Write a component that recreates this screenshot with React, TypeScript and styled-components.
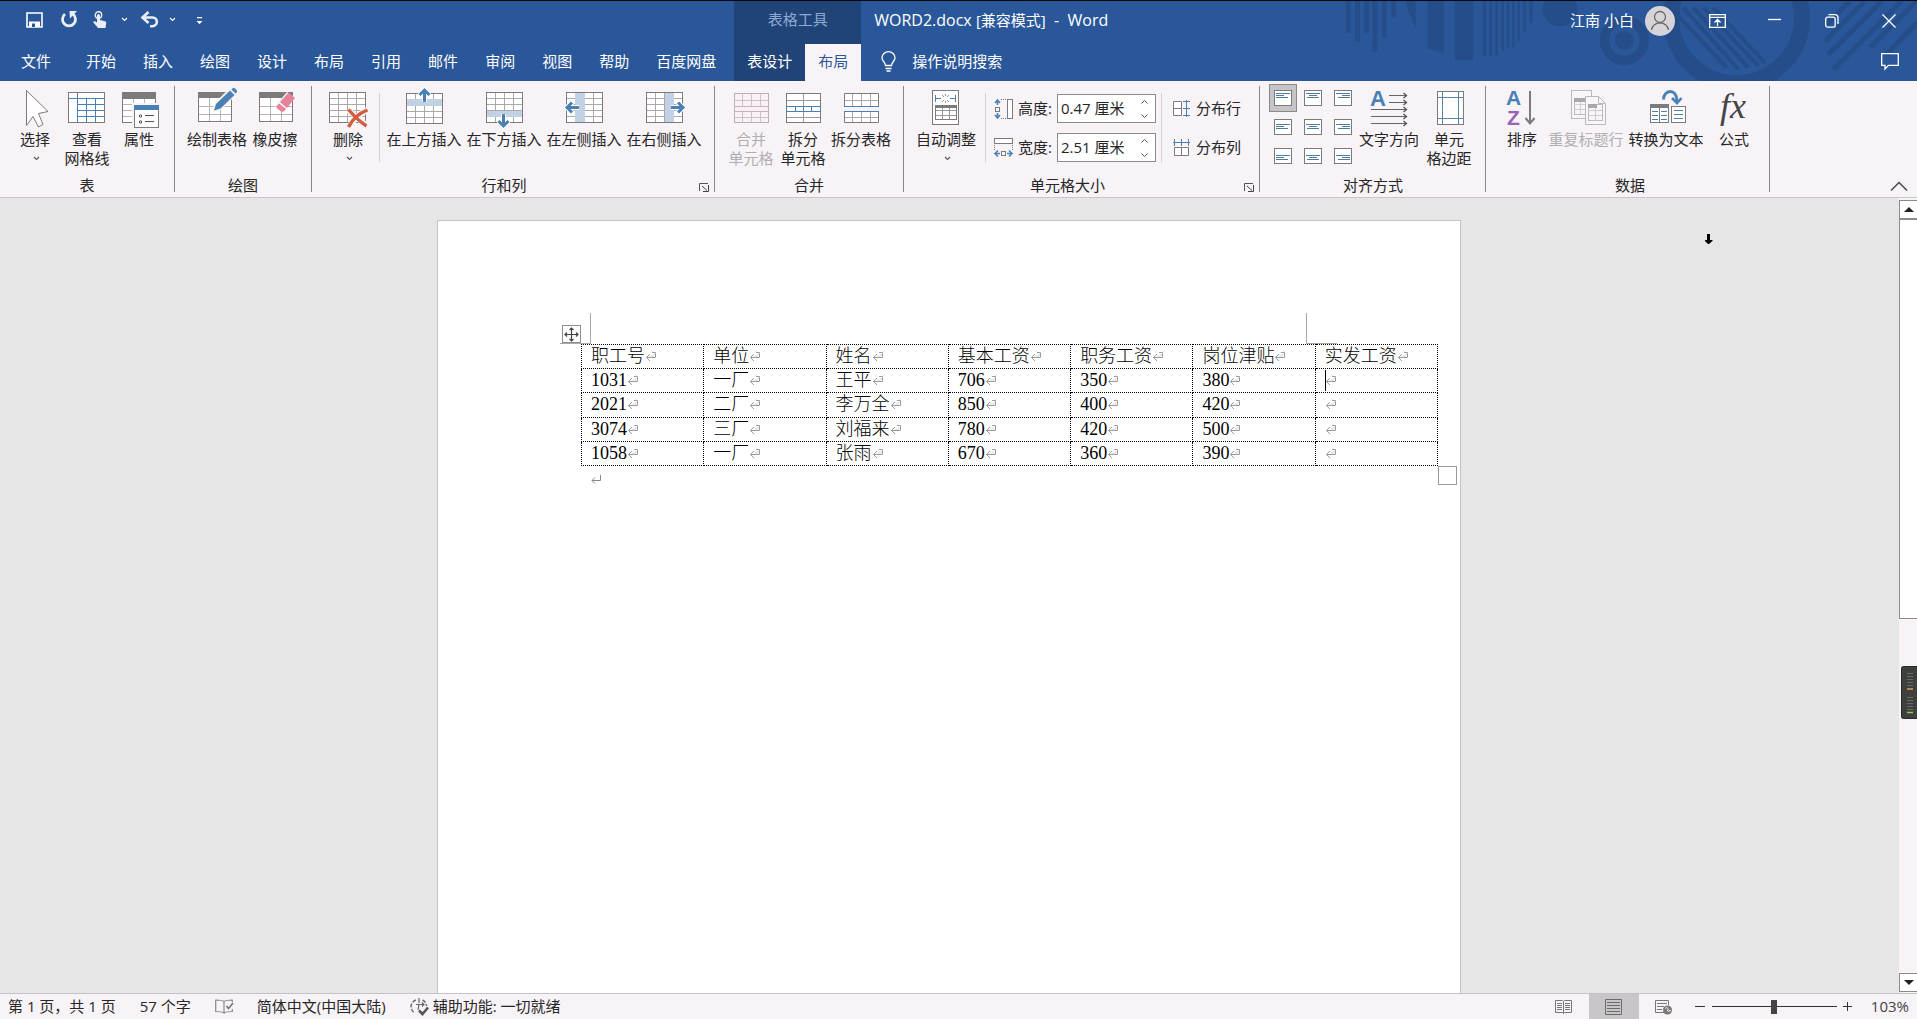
import React from "react";
import styled, { createGlobalStyle, css } from "styled-components";

const UI_FONT = '"Open Sans", "Noto Sans CJK SC", sans-serif';
const GREY = "#7b7b7b";
const BLUE = "#4a80b4";

const GlobalStyle = createGlobalStyle`
  *, *::before, *::after { box-sizing: border-box; }
  body { margin: 0; background: #e6e6e6; }
  button, input { font: inherit; color: inherit; }
  svg { display: block; flex: none; overflow: visible; }
`;

const plainButton = css`
  border: 0;
  padding: 0;
  margin: 0;
  background: transparent;
  cursor: default;
`;

const Shell = styled.div`
  height: 100vh;
  display: flex;
  flex-direction: column;
  overflow: hidden;
  font-family: ${UI_FONT};
  font-size: 15px;
  line-height: 19px;
  color: #262626;
  white-space: nowrap;
`;

/* ---------- header ---------- */

const Header = styled.header`
  position: relative;
  display: grid;
  grid-template-columns: auto auto 1fr;
  grid-template-rows: 43px 38px;
  background: #2a579a;
  border-top: 1px solid #05070f;
  margin-bottom: -1px;
  color: #fff;
  flex: none;
`;

const Pattern = styled.svg`
  position: absolute;
  right: 0;
  top: 0;
  overflow: hidden;
`;

const QuickAccess = styled.div`
  display: flex;
  align-items: center;
  padding: 0 0 6px 23px;
`;

const QuickButton = styled.button<{ $w: number }>`
  ${plainButton}
  width: ${(p) => p.$w}px;
  height: 22px;
  display: flex;
  align-items: center;
  justify-content: center;
`;

const ContextTitle = styled.div`
  background: #214478;
  color: #8ea9d0;
  text-align: center;
  line-height: 37px;
`;

const TitleArea = styled.div`
  position: relative;
  display: flex;
  align-items: center;
  padding: 0 0 4px 13px;
`;

const DocTitle = styled.h1`
  flex: 1;
  margin: 0;
  font-size: 16px;
  font-weight: 400;
  white-space: pre;
`;

const DocMode = styled.span`
  font-size: 15px;
`;

const Account = styled.button`
  ${plainButton}
  display: flex;
  align-items: center;
  gap: 11px;
  margin-right: 14px;
`;

const WindowButton = styled.button`
  ${plainButton}
  width: 57px;
  height: 34px;
  display: flex;
  align-items: center;
  justify-content: center;
`;

const TabStrip = styled.nav`
  display: flex;
  gap: 1px;
  padding-right: 5px;
`;

const ContextTabs = styled.nav`
  display: flex;
  background: #214478;
`;

const Tab = styled.button<{ $active?: boolean; $file?: boolean }>`
  ${plainButton}
  padding: 0 ${(p) => (p.$file ? 21 : 13)}px 3px;
  ${(p) => p.$active && "background: #f7f3f7; color: #2a579a;"}
`;

const TabTools = styled.div`
  position: relative;
  display: flex;
  align-items: center;
  justify-content: space-between;
  padding: 0 18px 3px 20px;
`;

const TellMe = styled.button`
  ${plainButton}
  display: flex;
  align-items: center;
  gap: 16px;
`;

const IconButton = styled.button`
  ${plainButton}
`;

/* ---------- ribbon ---------- */

const Ribbon = styled.div`
  position: relative;
  display: flex;
  flex: none;
  padding: 5px 0;
  background: #f7f3f7;
  border-bottom: 1px solid #c9c7c9;
`;

const Group = styled.section<{ $left: number; $right: number }>`
  position: relative;
  display: flex;
  flex-direction: column;
  border-right: 1px solid #868686;
  padding: 0 ${(p) => p.$right}px 0 ${(p) => p.$left}px;
`;

const GroupBody = styled.div`
  display: flex;
  height: 92px;
`;

const GroupLabel = styled.h2<{ $launcher?: boolean }>`
  margin: 0;
  padding-right: ${(p) => (p.$launcher ? 20 : 0)}px;
  font-size: 15px;
  font-weight: 400;
  line-height: 14px;
  text-align: center;
`;

const Launcher = styled.button`
  ${plainButton}
  position: absolute;
  right: 5px;
  bottom: 0;
`;

const BigButton = styled.button<{ $w: number }>`
  ${plainButton}
  width: ${(p) => p.$w}px;
  display: flex;
  flex-direction: column;
  align-items: center;
  &:disabled { color: #b1aeb1; }
`;

const ButtonText = styled.span`
  white-space: pre;
  text-align: center;
`;

const ChevronRow = styled.span`
  height: 19px;
  display: flex;
  align-items: center;
  padding-left: 3px;
  color: #555;
`;

const Divider = styled.div<{ $before: number }>`
  width: 1px;
  height: 69px;
  margin: 7px 4px 0 ${(p) => p.$before}px;
  background: #d3d0d3;
`;

const SizeRows = styled.div`
  display: flex;
  flex-direction: column;
  gap: 10px;
  padding: 8px 0 0 4px;
`;

const SizeRow = styled.div`
  display: flex;
  align-items: center;
  justify-content: space-between;
  height: 29px;
  gap: 5px;
`;

const Spinner = styled.div`
  display: flex;
  width: 99px;
  height: 29px;
  border: 1px solid #8b8b8b;
  background: #fff;
`;

const SpinnerInput = styled.input`
  flex: 1;
  min-width: 0;
  border: 0;
  padding: 0 0 0 3px;
  background: transparent;
  outline: 0;
`;

const SpinnerArrows = styled.div`
  display: flex;
  flex-direction: column;
  justify-content: center;
  gap: 1px;
  width: 20px;
`;

const ArrowButton = styled.button`
  ${plainButton}
  height: 13px;
  display: flex;
  align-items: center;
  justify-content: center;
`;

const DistributeColumn = styled.div`
  display: flex;
  flex-direction: column;
  gap: 10px;
  padding: 8px 0 0 7px;
`;

const DistributeButton = styled.button`
  ${plainButton}
  display: flex;
  align-items: center;
  gap: 6px;
  height: 29px;
`;

const AlignGrid = styled.div`
  display: grid;
  grid-template-columns: repeat(3, 28px);
  grid-auto-rows: 28px;
  gap: 1px 2px;
  margin-top: -2px;
`;

const AlignButton = styled.button<{ $on: boolean }>`
  ${plainButton}
  display: flex;
  align-items: center;
  justify-content: center;
  ${(p) => p.$on && "background: #c6c4c6; border: 1px solid #8a8a8a;"}
`;

const Collapse = styled.button`
  ${plainButton}
  margin: auto 9px 0 auto;
  padding-bottom: 1px;
`;

/* ---------- document ---------- */

const Workspace = styled.main`
  flex: 1;
  min-height: 0;
  display: flex;
  background: #e6e6e6;
`;

const Canvas = styled.div`
  position: relative;
  flex: 1;
  display: flex;
  justify-content: center;
  padding: 22px 1px 0 0;
`;

const Page = styled.article`
  position: relative;
  width: 1024px;
  background: #fff;
  border: 1px solid #c4c4c4;
  border-bottom: 0;
  padding: 123px 0 0 143px;
`;

const SheetTable = styled.table`
  position: relative;
  width: 857px;
  height: 122px;
  table-layout: fixed;
  border-collapse: collapse;
  font-family: "Liberation Serif", "Noto Sans CJK SC Light", "Noto Sans CJK SC", serif;
  font-size: 18px;
  line-height: 23px;
  color: #000;
`;

const cell = css`
  height: 24px;
  padding: 0 0 0 9px;
  border: 1px dotted #000;
  text-align: left;
  font-weight: 300;
`;

const HeadCell = styled.th`${cell}`;
const DataCell = styled.td`${cell}`;

const CellLine = styled.span`
  position: relative;
  display: flex;
  align-items: center;
  height: 23px;
`;

const Caret = styled.span`
  position: absolute;
  left: 0;
  top: 1px;
  width: 1px;
  height: 21px;
  background: #000;
`;

const EndParagraph = styled.p`
  margin: 0;
  padding: 9px 0 0 10px;
`;

const Overlay = styled.svg<{ $x: number; $y: number }>`
  position: absolute;
  left: ${(p) => p.$x}px;
  top: ${(p) => p.$y}px;
`;

const Pointer = styled.svg`
  position: absolute;
  right: 185px;
  top: 35px;
`;

const ScrollBar = styled.div`
  position: relative;
  width: 18px;
  display: flex;
  flex-direction: column;
  padding: 2px 0 1px;
  background: #f7f3f7;
`;

const ScrollArrow = styled.button`
  ${plainButton}
  height: 19px;
  flex: none;
  display: flex;
  align-items: center;
  justify-content: center;
  background: #fff;
  border: 1px solid #8b8b8b;
  border-right: 0;
`;

const ScrollTrack = styled.div`
  flex: 1;
`;

const ScrollThumb = styled.div`
  height: 53%;
  background: #fff;
  border: 1px solid #8b8b8b;
  border-right: 0;
`;

const Meter = styled.div`
  position: absolute;
  right: 0;
  top: 468px;
  width: 16px;
  height: 53px;
  padding: 6px 5px;
  border: 1px solid #2a2a2a;
  border-right: 0;
  border-radius: 3px 0 0 3px;
  background: #3e403e;
`;

/* ---------- status bar ---------- */

const StatusBar = styled.footer`
  flex: none;
  display: flex;
  align-items: center;
  height: 26px;
  padding: 0 8px;
  background: #f7f3f7;
  border-top: 1px solid #c4c2c4;
`;

const StatusItem = styled.button`
  ${plainButton}
  display: flex;
  align-items: center;
  gap: 4px;
  margin-right: 24px;
`;

const StatusGap = styled.div`
  flex: 1;
`;

const ViewButton = styled.button<{ $on?: boolean }>`
  ${plainButton}
  width: 50px;
  height: 25px;
  display: flex;
  align-items: center;
  justify-content: center;
  ${(p) => p.$on && "background: #c8c6c8;"}
`;

const ZoomStep = styled.button`
  ${plainButton}
  width: 22px;
  height: 25px;
  display: flex;
  align-items: center;
  justify-content: center;
`;

const ZoomRange = styled.input`
  appearance: none;
  width: 125px;
  height: 16px;
  margin: 0 0 0 1px;
  background: linear-gradient(#333, #333) center / 100% 1px no-repeat;
  &::-webkit-slider-thumb {
    appearance: none;
    width: 6px;
    height: 14px;
    background: #444;
  }
`;

const ZoomValue = styled.button`
  ${plainButton}
  margin-left: 12px;
  color: #444;
`;

/* ---------- icons ---------- */

const Ico = ({ children }: { children: React.ReactNode }) => (
  <svg width="40" height="44" viewBox="0 0 40 44" fill="none">
    {children}
  </svg>
);

const lines = (vs: number[], hs: number[], x1: number, x2: number, y1: number, y2: number) =>
  vs.map((v) => `M${v + 0.5} ${y1}V${y2}`).join("") + hs.map((h) => `M${x1} ${h + 0.5}H${x2}`).join("");

const Chevron = () => (
  <svg width="7" height="5" viewBox="0 0 7 5" fill="none">
    <path d="M1 1l2.500 2.500L6 1" stroke="currentColor" strokeWidth="1.1" />
  </svg>
);

const SpinArrow = ({ up }: { up?: boolean }) => (
  <svg width="9" height="6" viewBox="0 0 9 6" fill="none">
    <path d={up ? "M1.500 4.500l3-3 3 3" : "M1.500 1.500l3 3 3-3"} stroke="#555" />
  </svg>
);

const SelectIcon = () => (
  <Ico>
    <path d="M11.500 4.500V39.500L18 30.500L23.500 41L28 38.500L23.500 27.500L33 25.500Z" fill="#fff" stroke={GREY} />
  </Ico>
);

const ViewGridIcon = () => (
  <Ico>
    <rect x="1.500" y="6.500" width="36" height="30" fill="#fff" />
    <path d={lines([19, 28], [18, 24, 30], 10, 38, 12, 37) + "M10.500 7V37M2 12.500H37"} stroke={BLUE} />
    <rect x="1.500" y="6.500" width="36" height="30" stroke={GREY} />
  </Ico>
);

const PropertiesIcon = () => (
  <Ico>
    <rect x="3.500" y="6.500" width="33" height="30" fill="#fff" stroke={GREY} />
    <path d={lines([14, 25], [18, 24, 30], 4, 36, 12, 36)} stroke="#b5b5b5" />
    <rect x="3" y="6" width="34" height="7" fill={GREY} />
    <rect x="13" y="17" width="27" height="27" fill="#f7f3f7" />
    <rect x="15.500" y="19.500" width="24" height="22" fill="#fff" stroke={GREY} />
    <rect x="15" y="19" width="25" height="5" fill={BLUE} />
    <circle cx="21.500" cy="30" r="1.200" stroke="#444" />
    <circle cx="21.500" cy="36" r="1.200" stroke="#444" />
    <path d="M26 29.500h9M26 35.500h9" stroke="#555" />
  </Ico>
);

const HeaderGrid = ({ x }: { x: number }) => (
  <>
    <rect x={x + 0.5} y="6.500" width="33" height="30" fill="#fff" />
    <path d={lines([x + 11, x + 22], [20, 28], x, x + 33, 12, 36)} stroke="#b5b5b5" />
    <rect x={x + 0.5} y="6.500" width="33" height="29" stroke={GREY} />
    <rect x={x} y="6" width="34" height="6" fill={GREY} />
  </>
);

const DrawTableIcon = () => (
  <Ico>
    <HeaderGrid x={1} />
    <path d="M16 25l2.500-8L34 2l5.500 5.500L24 23z" fill="#f7f3f7" stroke="#f7f3f7" strokeWidth="1.500" />
    <path d="M17 24.500l2-6.500L33 4.500l4.500 4.500L23.500 22.500z" fill={BLUE} />
    <path d="M34.500 3.500l1.500-1.500q1-.500 2 .500l1.500 1.500q1 1 .500 2L38.500 7.500z" fill={BLUE} />
  </Ico>
);

const EraserIcon = () => (
  <Ico>
    <HeaderGrid x={4} />
    <path d="M32 6l8 6-12 14-8-6z" fill="#f7f3f7" />
    <path d="M33.500 6.500L40 12L32 22L25 16Z" fill="#e6829a" />
    <path d="M24 17.500l7 5.500-2 2.500h-3l-4.500-3.500v-2z" fill="#e6829a" />
  </Ico>
);

const PlainGrid = ({ band, x = 1, y = 6 }: { band?: string; x?: number; y?: number }) => (
  <g transform={`translate(${x} ${y})`}>
    <rect x="0.500" y="0.500" width="36" height="30" fill="#fff" />
    <path d={lines([9, 18, 27], [6, 12, 18, 24], 0, 36, 0, 30)} stroke="#a9a9a9" />
    {band && <path d={band} fill="#c3d1e4" />}
    <rect x="0.500" y="0.500" width="36" height="30" stroke={GREY} />
  </g>
);

const DeleteIcon = () => (
  <Ico>
    <PlainGrid />
    <path d="M20 24l19 16M39 24c-8 4-14 10-18 18" stroke="#f7f3f7" strokeWidth="6" />
    <path d="M20.500 23.500c5 6 11 12 18 16.500M39.500 24c-8 3-15 9-19 17" stroke="#d35c3e" strokeWidth="3.400" />
  </Ico>
);

const ARROW_UP = "M0 13V1M-5 6L0 1L5 6";
const InsertIcon = ({ dir }: { dir: "up" | "down" | "left" | "right" }) => {
  const spec = {
    up: ["M1 6H36V13H1Z", 20.5, 3, 0],
    down: ["M1 19H36V25H1Z", 19.5, 41, 180],
    left: ["M9 1H19V30H9Z", 2, 21.5, -90],
    right: ["M19 1H28V30H19Z", 40, 21.5, 90],
  }[dir] as [string, number, number, number];
  return (
    <Ico>
      <PlainGrid x={2} y={dir === "up" ? 7 : 6} band={spec[0]} />
      <g transform={`translate(${spec[1]} ${spec[2]}) rotate(${spec[3]})`}>
        <path d={ARROW_UP} stroke="#fff" strokeWidth="5" />
        <path d={ARROW_UP} stroke={BLUE} strokeWidth="3" />
      </g>
    </Ico>
  );
};

const MergeIcon = () => (
  <Ico>
    <rect x="3.500" y="7.500" width="34" height="29" fill="#faf1f6" />
    <path d="M11.500 8V20M20.500 8V20M29.500 8V20M11.500 26V36M20.500 26V36M29.500 26V36M4 14.500H37M4 31.500H37" stroke="#cfc3ca" />
    <path d="M4 20.500H37M4 25.500H37" stroke="#c9b3bf" />
    <rect x="3.500" y="7.500" width="34" height="29" stroke="#b9b1b6" />
  </Ico>
);

const SplitCellsIcon = () => (
  <Ico>
    <rect x="3.500" y="7.500" width="34" height="29" fill="#fff" stroke={GREY} />
    <path d="M20.500 8V20M20.500 26V36M4 14.500H37M4 31.500H37" stroke="#999" />
    <path d="M3.500 20.500H37.500V25.500H3.500ZM12.500 20V26M20.500 20V26M28.500 20V26" stroke={BLUE} />
  </Ico>
);

const SplitTableIcon = () => (
  <Ico>
    <path d="M3.500 7.500H37.500V20.500H3.500ZM3.500 25.500H37.500V36.500H3.500Z" fill="#fff" stroke={GREY} />
    <path d="M11.500 8V20M20.500 8V20M29.500 8V20M11.500 26V36M20.500 26V36M29.500 26V36M4 14.500H37M4 31.500H37" stroke="#a9a9a9" />
    <path d="M3 20.500H38M3 25.500H38" stroke={BLUE} />
  </Ico>
);

const AutoFitIcon = () => (
  <Ico>
    <rect x="6.500" y="4.500" width="26" height="34" fill="#fff" stroke={GREY} />
    <path d="M9.500 9V16M29.500 9V16M10 12.500H15M24 12.500H29" stroke={BLUE} />
    <path d="M16 9l2 2M23 9l-2 2M16 16l2-2M23 16l-2-2M19.500 8v2M19.500 15v2" stroke="#999" />
    <path d={lines([16, 23], [24, 29], 10, 30, 20, 34)} stroke="#999" />
    <rect x="9.500" y="19.500" width="21" height="14" stroke={GREY} />
    <rect x="9" y="19" width="22" height="3" fill={GREY} />
  </Ico>
);

const TextDirectionIcon = () => (
  <Ico>
    <text x="1" y="20" fontFamily="Liberation Sans, sans-serif" fontWeight="700" fontSize="22" fill={BLUE}>A</text>
    <path d="M20 9.500H37M20 16.500H37M2 23.500H37M2 30.500H37M2 37.500H37" stroke="#666" />
    <path d="M34.500 7l3 2.500-3 2.500M34.500 14l3 2.500-3 2.500M34.500 21l3 2.500-3 2.500M34.500 28l3 2.500-3 2.500M34.500 35l3 2.500-3 2.500" stroke="#555" strokeWidth="1.300" />
  </Ico>
);

const CellMarginsIcon = () => (
  <Ico>
    <rect x="8.500" y="5.500" width="26" height="33" fill="#fff" stroke={GREY} />
    <path d="M13.500 6V38M29.500 6V38M9 11.500H34M9 32.500H34" stroke="#5b88a8" />
  </Ico>
);

const SortIcon = () => (
  <Ico>
    <text x="4" y="19" fontFamily="Liberation Sans, sans-serif" fontWeight="700" fontSize="21" fill={BLUE}>A</text>
    <text x="5" y="39" fontFamily="Liberation Sans, sans-serif" fontWeight="700" fontSize="21" fill="#9a62b4">Z</text>
    <path d="M28 5V37M23.500 32l4.500 5.500 4.500-5.500" stroke={GREY} strokeWidth="2" />
  </Ico>
);

const RepeatHeaderIcon = () => (
  <Ico>
    <rect x="5.500" y="4.500" width="20" height="28" fill="#faf5f9" stroke="#bcb8bc" />
    <rect x="8.500" y="12.500" width="13" height="16" stroke="#bcb8bc" />
    <path d="M8 18.500h13M8 23.500h13M14.500 15v13" stroke="#cfcbcf" />
    <rect x="8" y="12" width="14" height="4" fill="#aaa6aa" />
    <path d="M19.500 10.500H32.500L39.500 17.500V38.500H19.500Z" fill="#faf5f9" stroke="#bcb8bc" />
    <path d="M32.500 11V17.500H39" stroke="#bcb8bc" />
    <rect x="22.500" y="18.500" width="14" height="16" stroke="#bcb8bc" />
    <path d="M22 24.500h14M22 29.500h14M29.500 20v15" stroke="#cfcbcf" />
    <rect x="22" y="18" width="9" height="4" fill="#aaa6aa" />
  </Ico>
);

const ConvertIcon = () => (
  <Ico>
    <rect x="4.500" y="18.500" width="18" height="18" fill="#fff" stroke={GREY} />
    <rect x="4" y="18" width="19" height="4" fill={GREY} />
    <path d="M13.500 22V36" stroke={GREY} />
    <path d="M6 25.500h6M6 29.500h6M6 33.500h6M15 25.500h6M15 29.500h6M15 33.500h6" stroke={BLUE} />
    <rect x="25.500" y="20.500" width="14" height="16" fill="#fff" stroke={GREY} />
    <path d="M28 24.500h9M28 28.500h9M28 32.500h9" stroke={BLUE} />
    <path d="M17.500 13.500C18 3 30.500 2 31 15" stroke={BLUE} strokeWidth="3" />
    <path d="M26 12L31 17L35.500 12" stroke={BLUE} strokeWidth="2.600" />
  </Ico>
);

const FormulaIcon = () => (
  <Ico>
    <text x="6" y="32" fontFamily="Liberation Serif, serif" fontStyle="italic" fontSize="36" fill="#444">fx</text>
  </Ico>
);

const HeightIcon = () => (
  <svg width="19" height="20" viewBox="0 0 19 20" fill="none">
    <path d="M3.500 1V6M3.500 14V19M1 4l2.500-3L6 4M1 16l2.500 3L6 16" stroke={BLUE} strokeWidth="1.600" />
    <rect x="1.500" y="8.500" width="4" height="4" stroke={GREY} />
    <path d="M7 .500H13M7 19.500H13" stroke="#777" strokeDasharray="1 1" />
    <rect x="13.500" y=".500" width="5" height="19" fill="#fff" stroke={GREY} />
  </svg>
);

const WidthIcon = () => (
  <svg width="19" height="19" viewBox="0 0 19 19" fill="none">
    <rect x=".500" y=".500" width="18" height="5" fill="#fff" stroke={GREY} />
    <path d="M.500 7V13M18.500 7V13" stroke="#777" strokeDasharray="1 1" />
    <path d="M1 15.500H6M13 15.500H18M4 12.500l-3 3 3 3M15 12.500l3 3-3 3" stroke={BLUE} strokeWidth="1.600" />
    <rect x="7.500" y="13.500" width="4" height="4" stroke={GREY} />
  </svg>
);

const DistributeRowsIcon = () => (
  <svg width="17" height="17" viewBox="0 0 17 17" fill="none">
    <path d="M.500 1.500H8.500V15.500H.500ZM.500 8.500H8.500" fill="#fff" stroke={GREY} />
    <path d="M13.500 0V17M10 1.500H17M10 8.500H17M10 15.500H17" stroke={BLUE} />
  </svg>
);

const DistributeColumnsIcon = () => (
  <svg width="17" height="17" viewBox="0 0 17 17" fill="none">
    <path d="M1.500 8.500H15.500V16.500H1.500ZM8.500 8.500V16.500" fill="#fff" stroke={GREY} />
    <path d="M0 3.500H17M1.500 0V7M8.500 0V7M15.500 0V7" stroke={BLUE} />
  </svg>
);

const AlignIcon = ({ row, col }: { row: number; col: number }) => {
  const top = [3, 5, 7][row];
  const widths = [14, 8, 12];
  return (
    <svg width="18" height="16" viewBox="0 0 18 16" fill="none">
      <rect x=".500" y=".500" width="17" height="15" fill="#fff" stroke={GREY} />
      {widths.map((w, i) => {
        const x = col === 0 ? 2 : col === 1 ? (18 - w) / 2 : 16 - w;
        return <path key={i} d={`M${x} ${top + i * 2 + 0.5}h${w}`} stroke="#4e7a9c" />;
      })}
    </svg>
  );
};

const LauncherIcon = () => (
  <svg width="10" height="9" viewBox="0 0 10 9" fill="none">
    <path d="M.500 8V.500H9" stroke="#555" />
    <path d="M3 3l5 4.500M9.500 2V8.500H4" stroke="#444" />
  </svg>
);

const ReturnMark = () => (
  <svg width="12" height="11" viewBox="0 0 12 11" fill="none">
    <path d="M7 1.500H10.500V6.500H1.500M5 3L1.500 6.500L5 10" stroke="#9c9c9c" />
    <path d="M5.500 5H9V3" stroke="#d8d8d8" />
  </svg>
);

const HeaderPattern = () => (
  <Pattern width="577" height="80" viewBox="0 0 1731 240" fill="none">
    <g fill="#1f3f6e" opacity=".38">
      <path d="M18 0h14v95h-14zM45 0h15v122h-15zM72 0h15v95h-15zM97 0h15v152h-15zM126 0h14v110h-14zM154 0h14v50h-14zM195 0h32v85z" />
      <path d="M262 0h50v157l-50-14zM344 0h56v178h-56z" />
      <path d="M428 0h10v165h-10zM448 0h8v165h-8zM466 0h8v165h-8zM484 0h8v150h-8zM500 0h8v140h-8zM516 0h8v140h-8zM532 0h8v120h-8zM550 0h8v95h-8zM568 0h10v65h-10z" />
      <circle cx="660" cy="25" r="52" />
      <circle cx="853" cy="118" r="28" />
    </g>
    <g stroke="#1f3f6e" opacity=".38">
      <circle cx="853" cy="118" r="60" strokeWidth="28" />
      <circle cx="1190" cy="50" r="196" strokeWidth="48" />
      <path d="M1000 30L1160 200M1030 20L1195 205M1060 20L1225 200M1090 20L1255 195M1120 20L1275 185" strokeWidth="12" />
      <path d="M1460 70L1530 0M1455 120L1575 0M1465 160L1625 0M1480 205L1685 0M1590 140L1730 0M1640 160L1731 65" strokeWidth="15" />
    </g>
  </Pattern>
);

/* ---------- data ---------- */

const TABS = ["文件", "开始", "插入", "绘图", "设计", "布局", "引用", "邮件", "审阅", "视图", "帮助", "百度网盘"];
const COLUMNS = ["职工号", "单位", "姓名", "基本工资", "职务工资", "岗位津贴", "实发工资"];
const ROWS = [
  ["1031", "一厂", "王平", "706", "350", "380", ""],
  ["2021", "二厂", "李万全", "850", "400", "420", ""],
  ["3074", "三厂", "刘福来", "780", "420", "500", ""],
  ["1058", "一厂", "张雨", "670", "360", "390", ""],
];
const ALIGN_NAMES = ["靠上左对齐", "靠上居中", "靠上右对齐", "中部左对齐", "水平居中", "中部右对齐", "靠下左对齐", "靠下居中", "靠下右对齐"];

type ToolProps = { icon: React.ReactNode; text: string; w: number; menu?: boolean; disabled?: boolean };
const Tool = ({ icon, text, w, menu, disabled }: ToolProps) => (
  <BigButton $w={w} disabled={disabled}>
    {icon}
    <ButtonText>{text}</ButtonText>
    {menu && <ChevronRow><Chevron /></ChevronRow>}
  </BigButton>
);

type SizeFieldProps = { id: string; label: string; value: string; icon: React.ReactNode };
const SizeField = ({ id, label, value, icon }: SizeFieldProps) => (
  <SizeRow>
    {icon}
    <label htmlFor={id}>{label}</label>
    <Spinner>
      <SpinnerInput id={id} type="text" defaultValue={value} />
      <SpinnerArrows>
        <ArrowButton aria-label="增加"><SpinArrow up /></ArrowButton>
        <ArrowButton aria-label="减少"><SpinArrow /></ArrowButton>
      </SpinnerArrows>
    </Spinner>
  </SizeRow>
);

export default function App() {
  return (
    <Shell>
      <GlobalStyle />
      <Header>
        <HeaderPattern />
        <QuickAccess>
          <QuickButton $w={22} aria-label="保存">
            <svg width="17" height="16" viewBox="0 0 17 16" fill="none">
              <path d="M1 1H16V15H1Z" stroke="#fff" strokeWidth="1.600" />
              <path d="M3 9.500H14V15H3Z" fill="#fff" />
              <path d="M6 11.500H9V15H6Z" fill="#2a579a" />
            </svg>
          </QuickButton>
          <QuickButton $w={48} aria-label="重复">
            <svg width="18" height="17" viewBox="0 0 18 17" fill="none">
              <path d="M5 3.200A6.500 6.500 0 1 0 13 3.200" stroke="#e9eef7" strokeWidth="2.800" />
              <path d="M9.500 0H17L10 7.500Z" fill="#e9eef7" />
            </svg>
          </QuickButton>
          <QuickButton $w={14} aria-label="触摸/鼠标模式">
            <svg width="14" height="17" viewBox="0 0 14 17" fill="none">
              <circle cx="5.500" cy="4" r="3.200" stroke="#e9eef7" strokeWidth="1.400" />
              <path d="M4 4.500a1.500 1.500 0 0 1 3 0V9l5 1.200q1.500.500 1.200 2L12.500 17H5L0 11q1-1.500 4 .500Z" fill="#e9eef7" />
            </svg>
          </QuickButton>
          <QuickButton $w={34} aria-label="触摸菜单"><Chevron /></QuickButton>
          <QuickButton $w={18} aria-label="撤消">
            <svg width="18" height="16" viewBox="0 0 18 16" fill="none">
              <path d="M2 5.500H11.500a4.300 4.300 0 0 1 0 8.700H9" stroke="#e9eef7" strokeWidth="2.600" />
              <path d="M7.500 0L1.500 5.500L7.500 11" stroke="#e9eef7" strokeWidth="2.600" />
            </svg>
          </QuickButton>
          <QuickButton $w={26} aria-label="撤消列表"><Chevron /></QuickButton>
          <QuickButton $w={28} aria-label="自定义快速访问工具栏">
            <svg width="7" height="5" viewBox="0 0 7 5">
              <path d="M1 0H6V1.300H1ZM.500 4H6.500L3.500 7.200Z" fill="#fff" />
            </svg>
          </QuickButton>
        </QuickAccess>
        <ContextTitle>表格工具</ContextTitle>
        <TitleArea>
          <DocTitle>WORD2.docx <DocMode>[兼容模式]</DocMode>{"  -  Word"}</DocTitle>
          <Account>
            江南 小白
            <svg width="30" height="30" viewBox="0 0 30 30" fill="none">
              <circle cx="15" cy="15" r="15" fill="#d7d4d9" />
              <circle cx="15" cy="11" r="5.500" stroke="#666" strokeWidth="1.300" />
              <path d="M6.500 24C7.500 14.500 22.500 14.500 23.500 24" stroke="#666" strokeWidth="1.300" />
            </svg>
          </Account>
          <WindowButton aria-label="功能区显示选项">
            <svg width="17" height="14" viewBox="0 0 17 14" fill="none">
              <path d="M.700 .700H16.300V13.300H.700ZM.700 3.300H16.300M8.500 12V6M5.500 8.500L8.500 5.500L11.500 8.500" stroke="#fff" strokeWidth="1.300" />
            </svg>
          </WindowButton>
          <WindowButton aria-label="最小化">
            <svg width="13" height="13" viewBox="0 0 13 13"><path d="M0 5.500H13" stroke="#fff" strokeWidth="1.300" /></svg>
          </WindowButton>
          <WindowButton aria-label="还原">
            <svg width="14" height="14" viewBox="0 0 14 14" fill="none">
              <rect x=".700" y="3.200" width="9.500" height="10" rx="2" stroke="#fff" strokeWidth="1.300" />
              <path d="M3.500 .700H10a3 3 0 0 1 3 3V10" stroke="#fff" strokeWidth="1.300" />
            </svg>
          </WindowButton>
          <WindowButton aria-label="关闭">
            <svg width="14" height="14" viewBox="0 0 14 14"><path d="M.500 .500L13.500 13.500M13.500 .500L.500 13.500" stroke="#fff" strokeWidth="1.300" /></svg>
          </WindowButton>
        </TitleArea>
        <TabStrip>
          {TABS.map((t, i) => <Tab key={t} $file={i === 0}>{t}</Tab>)}
        </TabStrip>
        <ContextTabs>
          <Tab>表设计</Tab>
          <Tab $active>布局</Tab>
        </ContextTabs>
        <TabTools>
          <TellMe>
            <svg width="15" height="21" viewBox="0 0 15 21" fill="none">
              <path d="M4.500 14.500C4.500 11 1 10.500 1 6.800a6.500 6.200 0 0 1 13 0C14 10.500 10.500 11 10.500 14.500ZM4.500 17.500H10.500M5.500 20H9.500" stroke="#fff" strokeWidth="1.300" />
            </svg>
            操作说明搜索
          </TellMe>
          <IconButton aria-label="批注">
            <svg width="18" height="17" viewBox="0 0 18 17" fill="none">
              <path d="M.700 .700H17.300V12.300H7.500L4 16V12.300H.700Z" stroke="#fff" strokeWidth="1.300" />
            </svg>
          </IconButton>
        </TabTools>
      </Header>

      <Ribbon>
        <Group $left={11} $right={11}>
          <GroupBody>
            <Tool icon={<SelectIcon />} text="选择" w={48} menu />
            <Tool icon={<ViewGridIcon />} text={"查看\n网格线"} w={56} />
            <Tool icon={<PropertiesIcon />} text="属性" w={48} />
          </GroupBody>
          <GroupLabel>表</GroupLabel>
        </Group>
        <Group $left={10} $right={10}>
          <GroupBody>
            <Tool icon={<DrawTableIcon />} text="绘制表格" w={64} />
            <Tool icon={<EraserIcon />} text="橡皮擦" w={52} />
          </GroupBody>
          <GroupLabel>绘图</GroupLabel>
        </Group>
        <Group $left={12} $right={10}>
          <GroupBody>
            <Tool icon={<DeleteIcon />} text="删除" w={48} menu />
            <Divider $before={7} />
            <Tool icon={<InsertIcon dir="up" />} text="在上方插入" w={80} />
            <Tool icon={<InsertIcon dir="down" />} text="在下方插入" w={80} />
            <Tool icon={<InsertIcon dir="left" />} text="在左侧插入" w={80} />
            <Tool icon={<InsertIcon dir="right" />} text="在右侧插入" w={80} />
          </GroupBody>
          <GroupLabel $launcher>行和列</GroupLabel>
          <Launcher aria-label="表格属性"><LauncherIcon /></Launcher>
        </Group>
        <Group $left={10} $right={10}>
          <GroupBody>
            <Tool icon={<MergeIcon />} text={"合并\n单元格"} w={52} disabled />
            <Tool icon={<SplitCellsIcon />} text={"拆分\n单元格"} w={52} />
            <Tool icon={<SplitTableIcon />} text="拆分表格" w={64} />
          </GroupBody>
          <GroupLabel>合并</GroupLabel>
        </Group>
        <Group $left={10} $right={18}>
          <GroupBody>
            <Tool icon={<AutoFitIcon />} text="自动调整" w={64} menu />
            <Divider $before={7} />
            <SizeRows>
              <SizeField id="row-height" label="高度:" value="0.47 厘米" icon={<HeightIcon />} />
              <SizeField id="col-width" label="宽度:" value="2.51 厘米" icon={<WidthIcon />} />
            </SizeRows>
            <Divider $before={5} />
            <DistributeColumn>
              <DistributeButton><DistributeRowsIcon />分布行</DistributeButton>
              <DistributeButton><DistributeColumnsIcon />分布列</DistributeButton>
            </DistributeColumn>
          </GroupBody>
          <GroupLabel $launcher>单元格大小</GroupLabel>
          <Launcher aria-label="单元格大小设置"><LauncherIcon /></Launcher>
        </Group>
        <Group $left={9} $right={8}>
          <GroupBody>
            <AlignGrid>
              {ALIGN_NAMES.map((name, i) => (
                <AlignButton key={name} $on={i === 0} aria-label={name}>
                  <AlignIcon row={Math.floor(i / 3)} col={i % 3} />
                </AlignButton>
              ))}
            </AlignGrid>
            <Tool icon={<TextDirectionIcon />} text="文字方向" w={64} />
            <Tool icon={<CellMarginsIcon />} text={"单元\n格边距"} w={56} />
          </GroupBody>
          <GroupLabel>对齐方式</GroupLabel>
        </Group>
        <Group $left={12} $right={7}>
          <GroupBody>
            <Tool icon={<SortIcon />} text="排序" w={48} />
            <Tool icon={<RepeatHeaderIcon />} text="重复标题行" w={80} disabled />
            <Tool icon={<ConvertIcon />} text="转换为文本" w={80} />
            <Tool icon={<FormulaIcon />} text="公式" w={56} />
          </GroupBody>
          <GroupLabel>数据</GroupLabel>
        </Group>
        <Collapse aria-label="折叠功能区">
          <svg width="18" height="10" viewBox="0 0 18 10" fill="none">
            <path d="M1 9.500L9 1.500L17 9.500" stroke="#444" strokeWidth="1.400" />
          </svg>
        </Collapse>
      </Ribbon>

      <Workspace>
        <Canvas>
          <Page>
            <SheetTable>
              <thead>
                <tr>
                  {COLUMNS.map((c) => (
                    <HeadCell key={c} scope="col"><CellLine>{c}<ReturnMark /></CellLine></HeadCell>
                  ))}
                </tr>
              </thead>
              <tbody>
                {ROWS.map((r, ri) => (
                  <tr key={r[0]}>
                    {r.map((v, ci) => (
                      <DataCell key={ci}>
                        <CellLine>
                          {ri === 0 && ci === 6 && <Caret />}
                          {v}
                          <ReturnMark />
                        </CellLine>
                      </DataCell>
                    ))}
                  </tr>
                ))}
              </tbody>
            </SheetTable>
            <EndParagraph>
              <svg width="11" height="10" viewBox="0 0 11 10" fill="none">
                <path d="M9.500 0V5.500H1M4 2.500L1 5.500L4 8.500" stroke="#8a8a8a" />
              </svg>
            </EndParagraph>
            <Overlay $x={122} $y={92} width="31" height="31" viewBox="0 0 31 31" fill="none">
              <path d="M30.500 0V30.500H0" stroke="#a8a8a8" />
              <rect x="2.500" y="12.500" width="18" height="17" fill="#fff" stroke="#8e8e8e" />
              <path d="M11.500 15V28M5 21.500H18M9.500 17l2-2 2 2M9.500 26l2 2 2-2M7 19.500l-2 2 2 2M16 19.500l2 2-2 2" stroke="#444" strokeWidth="1.200" />
            </Overlay>
            <Overlay $x={868} $y={92} width="31" height="31" viewBox="0 0 31 31" fill="none">
              <path d="M.500 0V30.500H31" stroke="#a8a8a8" />
            </Overlay>
            <Overlay $x={1000} $y={245} width="19" height="19" viewBox="0 0 19 19" fill="none">
              <rect x=".500" y=".500" width="18" height="18" fill="#fff" stroke="#9a9a9a" />
            </Overlay>
          </Page>
          <Pointer width="11" height="13" viewBox="0 0 11 13">
            <path d="M4 1H7V7H9.500V8L6 11H5L2 8V7H4Z" fill="#000" />
          </Pointer>
        </Canvas>
        <ScrollBar>
          <ScrollArrow aria-label="向上滚动">
            <svg width="10" height="5" viewBox="0 0 10 5"><path d="M0 5L5 0L10 5Z" fill="#222" /></svg>
          </ScrollArrow>
          <ScrollTrack><ScrollThumb /></ScrollTrack>
          <ScrollArrow aria-label="向下滚动">
            <svg width="10" height="5" viewBox="0 0 10 5"><path d="M0 0L5 5L10 0Z" fill="#222" /></svg>
          </ScrollArrow>
          <Meter>
            <svg width="6" height="41" viewBox="0 0 6 41">
              <path d="M0 .500H6M0 3.500H6M0 6.500H6M0 9.500H6M0 12.500H6M0 24.500H6M0 27.500H6M0 30.500H6M0 33.500H6M0 36.500H6" stroke="#6a6c6a" />
              <path d="M0 16H6" stroke="#e0a050" strokeWidth="1.500" />
              <path d="M0 39.500H6" stroke="#8fd050" strokeWidth="1.500" />
            </svg>
          </Meter>
        </ScrollBar>
      </Workspace>

      <StatusBar>
        <StatusItem>第 1 页，共 1 页</StatusItem>
        <StatusItem>57 个字</StatusItem>
        <StatusItem aria-label="校对">
          <svg width="18" height="15" viewBox="0 0 18 15" fill="none">
            <path d="M9 2.500V14M9 2.500Q7 1 .700 1V12.500Q7 12.500 9 14Q11 12.500 17.300 12.500V10M9 2.500Q11 1 17.300 1V3" stroke="#888" strokeWidth="1.200" />
            <path d="M11.500 7l2 2.500L18 4" stroke="#777" strokeWidth="1.600" />
          </svg>
        </StatusItem>
        <StatusItem>简体中文(中国大陆)</StatusItem>
        <StatusItem>
          <svg width="19" height="18" viewBox="0 0 19 18" fill="none">
            <path d="M6 2A7 7 0 0 0 5 15M12.500 2a7 7 0 0 1 4 6" stroke="#666" strokeWidth="1.400" strokeDasharray="4 1.500" />
            <path d="M9 0V5M6 6.500H14M9 6.500L8 12M12 4.500l2 2-2 2" stroke="#666" strokeWidth="1.200" />
            <path d="M9 12.500l3.500 3.500L18 9.500" stroke="#555" strokeWidth="2.600" />
          </svg>
          辅助功能: 一切就绪
        </StatusItem>
        <StatusGap />
        <ViewButton aria-label="阅读视图">
          <svg width="17" height="14" viewBox="0 0 17 14" fill="none">
            <path d="M.500 .500H7.500L8.500 1.500L9.500 .500H16.500V12.500H9.500L8.500 13.500L7.500 12.500H.500ZM8.500 1V14" stroke="#777" />
            <path d="M2 3.500H7M2 5.500H7M2 7.500H7M2 9.500H7M10 3.500H15M10 5.500H15M10 7.500H15M10 9.500H15" stroke="#777" />
          </svg>
        </ViewButton>
        <ViewButton $on aria-label="页面视图">
          <svg width="17" height="16" viewBox="0 0 17 16" fill="none">
            <path d="M.500 .500H16.500V15.500H.500ZM2 3.500H15M2 6.500H15M2 9.500H15M2 12.500H15" stroke="#6a6a6a" />
          </svg>
        </ViewButton>
        <ViewButton aria-label="Web 版式视图">
          <svg width="17" height="16" viewBox="0 0 17 16" fill="none">
            <path d="M9 13.500H.500V1.500H13.500V6M2 4.500H12M2 7.500H9M2 10.500H7" stroke="#777" />
            <circle cx="12.500" cy="11" r="4.500" fill="#777" />
            <path d="M10 9.500q2-2 3 0t-1 2.500M13.500 13q.500-2 2.500-1.500" stroke="#f7f3f7" />
          </svg>
        </ViewButton>
        <ZoomStep aria-label="缩小">
          <svg width="10" height="10" viewBox="0 0 10 10"><path d="M0 4.500H10" stroke="#333" /></svg>
        </ZoomStep>
        <ZoomRange type="range" min={0} max={100} defaultValue={50} aria-label="显示比例" />
        <ZoomStep aria-label="放大">
          <svg width="9" height="9" viewBox="0 0 9 9"><path d="M0 4.500H9M4.500 0V9" stroke="#333" /></svg>
        </ZoomStep>
        <ZoomValue>103%</ZoomValue>
      </StatusBar>
    </Shell>
  );
}
